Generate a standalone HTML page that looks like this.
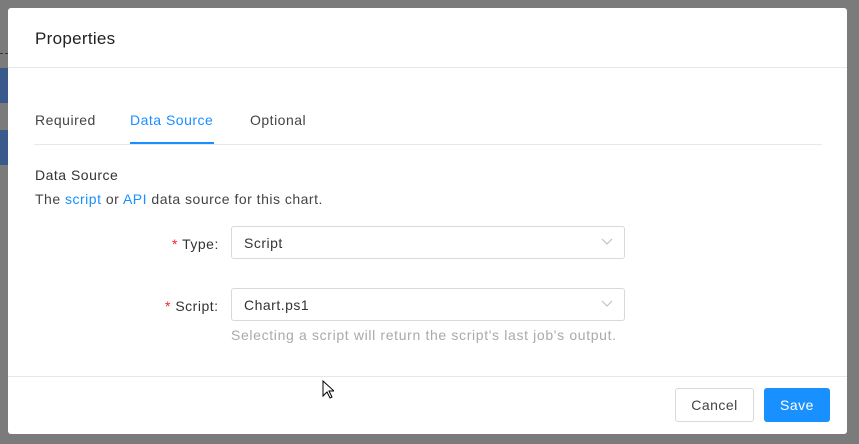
<!DOCTYPE html>
<html><head><style>
body{margin:0;width:859px;height:444px;background:#7b7b7b;position:relative;overflow:hidden;font-family:"Liberation Sans",sans-serif;}
.a{position:absolute}
.m{left:8px;top:8px;width:839px;height:426px;background:#fff;border-radius:3px}
.t{font-size:14px;color:#333;letter-spacing:0.5px}
.sel{position:absolute;left:231px;width:394px;height:33px;border:1px solid #d9d9d9;border-radius:3px;box-sizing:border-box;background:#fff}
.sel span{position:absolute;left:12px;top:8px;font-size:14px;color:#333;letter-spacing:0.5px}
.sel svg{position:absolute;right:11px;top:11px}
</style></head><body>
<div class="a" style="left:0;top:68px;width:8px;height:35px;background:#3a5a8c"></div>
<div class="a" style="left:0;top:130px;width:8px;height:35px;background:#3a5a8c"></div>
<div class="a" style="left:0;top:53px;width:8px;border-top:1px dashed #333"></div>
<div class="a m">
<div class="a" style="left:27px;top:21px;font-size:17px;color:#222;letter-spacing:0.3px">Properties</div>
<div class="a" style="left:0;top:59px;width:839px;border-top:1px solid #e8e8e8"></div>
<div class="a t" style="left:27px;top:104px;color:#444">Required</div>
<div class="a t" style="left:122px;top:104px;color:#1890ff">Data Source</div>
<div class="a t" style="left:242px;top:104px;color:#444">Optional</div>
<div class="a" style="left:26px;top:136px;width:788px;border-top:1px solid #e8e8e8"></div>
<div class="a" style="left:122px;top:134px;width:84px;height:2px;background:#1890ff"></div>
<div class="a t" style="left:27px;top:159px;color:#333">Data Source</div>
<div class="a t" style="left:27px;top:183px;color:#444">The <span style="color:#1890ff">script</span> or <span style="color:#1890ff">API</span> data source for this chart.</div>
</div>
<div class="a t" style="left:172px;top:236px"><span style="color:#f5222d">*</span> Type:</div>
<div class="sel" style="top:226px"><span>Script</span><svg width="12" height="8"><path d="M1 1l5 5 5-5" stroke="#bbb" fill="none"/></svg></div>
<div class="a t" style="left:165px;top:298px"><span style="color:#f5222d">*</span> Script:</div>
<div class="sel" style="top:288px"><span>Chart.ps1</span><svg width="12" height="8"><path d="M1 1l5 5 5-5" stroke="#bbb" fill="none"/></svg></div>
<div class="a t" style="left:231px;top:327px;color:#aaa;letter-spacing:0.65px">Selecting a script will return the script's last job's output.</div>
<div class="a" style="left:8px;top:376px;width:839px;border-top:1px solid #e8e8e8"></div>
<div class="a" style="left:675px;top:388px;width:79px;height:34px;border:1px solid #d9d9d9;border-radius:3px;box-sizing:border-box;font-size:14px;color:#444;text-align:center;line-height:32px;letter-spacing:0.5px">Cancel</div>
<div class="a" style="left:764px;top:388px;width:66px;height:34px;background:#1890ff;border-radius:3px;font-size:14px;color:#fff;text-align:center;line-height:34px;letter-spacing:0.5px">Save</div>
<svg class="a" style="left:322px;top:380px" width="12" height="19"><path d="M1 1v15l4-4 3 6 2-1-3-6h5z" fill="#fff" stroke="#000"/></svg>
</body></html>
